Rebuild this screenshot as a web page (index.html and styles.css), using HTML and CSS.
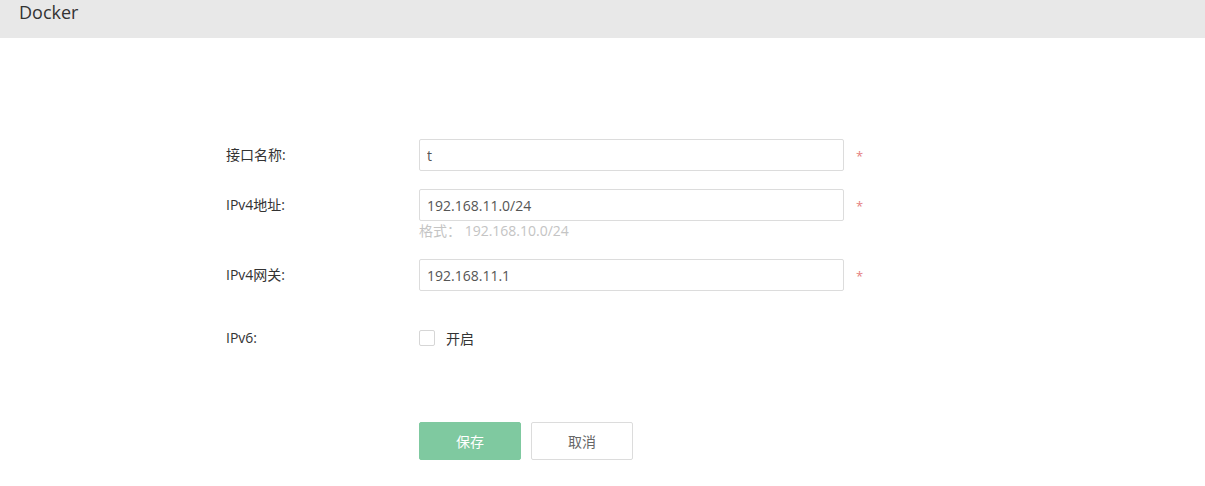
FILE: index.html
```html
<!DOCTYPE html>
<html lang="zh">
<head>
    <meta charset="UTF-8">
    <meta name="viewport" content="width=device-width, initial-scale=1.0">
    <title>Docker</title>
    <link rel="stylesheet" href="styles.css">
</head>
<body>

    <div class="header">Docker</div>

    <form class="form" onsubmit="return false">
        <div class="row">
            <label class="label">接口名称:</label>
            <div class="field">
                <input class="input" type="text" value="t">
            </div>
            <span class="star">*</span>
        </div>

        <div class="row">
            <label class="label">IPv4地址:</label>
            <div class="field">
                <input class="input" type="text" value="192.168.11.0/24">
                <div class="hint">格式： 192.168.10.0/24</div>
            </div>
            <span class="star">*</span>
        </div>

        <div class="row">
            <label class="label">IPv4网关:</label>
            <div class="field">
                <input class="input" type="text" value="192.168.11.1">
            </div>
            <span class="star">*</span>
        </div>

        <div class="row row-check">
            <label class="label">IPv6:</label>
            <label class="check">
                <span class="box"></span>
                <span>开启</span>
            </label>
        </div>

        <div class="actions">
            <button class="btn btn-save">保存</button>
            <button class="btn btn-cancel">取消</button>
        </div>
    </form>

</body>
</html>
```

FILE: styles.css
```css
* {
    margin: 0;
    padding: 0;
    box-sizing: border-box;
}

body {
    font-family: "Open Sans", "Noto Sans CJK SC", sans-serif;
    background: #fff;
    color: #333;
    font-size: 14px;
}

.header {
    height: 38px;
    background: #e8e8e8;
    padding-left: 19px;
    font-size: 18px;
    line-height: 24px;
    color: #333;
}

.form {
    padding-top: 101px;
    padding-left: 226px;
}

.row {
    display: flex;
    align-items: flex-start;
    margin-bottom: 18px;
}

.label {
    width: 193px;
    line-height: 32px;
    color: #333;
}

.field {
    width: 425px;
}

.input {
    display: block;
    width: 100%;
    height: 32px;
    border: 1px solid #dcdcdc;
    border-radius: 2px;
    padding: 0 7px;
    font-family: inherit;
    font-size: 14px;
    color: #555;
    outline: none;
}

.hint {
    line-height: 20px;
    color: #c4c4c4;
}

.star {
    margin-left: 12px;
    padding-top: 2px;
    line-height: 30px;
    color: #e57f7f;
    font-size: 13px;
}

/* collapses with the row above */
.row-check {
    margin-top: 31px;
}

.check {
    display: flex;
    align-items: center;
    height: 32px;
    gap: 11px;
    color: #333;
}

.box {
    width: 16px;
    height: 16px;
    border: 1px solid #d6d6d6;
    border-radius: 2px;
    background: #fff;
}

.actions {
    display: flex;
    gap: 10px;
    margin-top: 68px;
    padding-left: 193px;
}

.btn {
    width: 102px;
    height: 38px;
    border-radius: 2px;
    font-family: inherit;
    font-size: 14px;
    cursor: pointer;
}

.btn-save {
    background: #7fc9a0;
    border: 1px solid #7fc9a0;
    color: #fff;
}

.btn-cancel {
    background: #fff;
    border: 1px solid #dcdcdc;
    color: #666;
}
```
